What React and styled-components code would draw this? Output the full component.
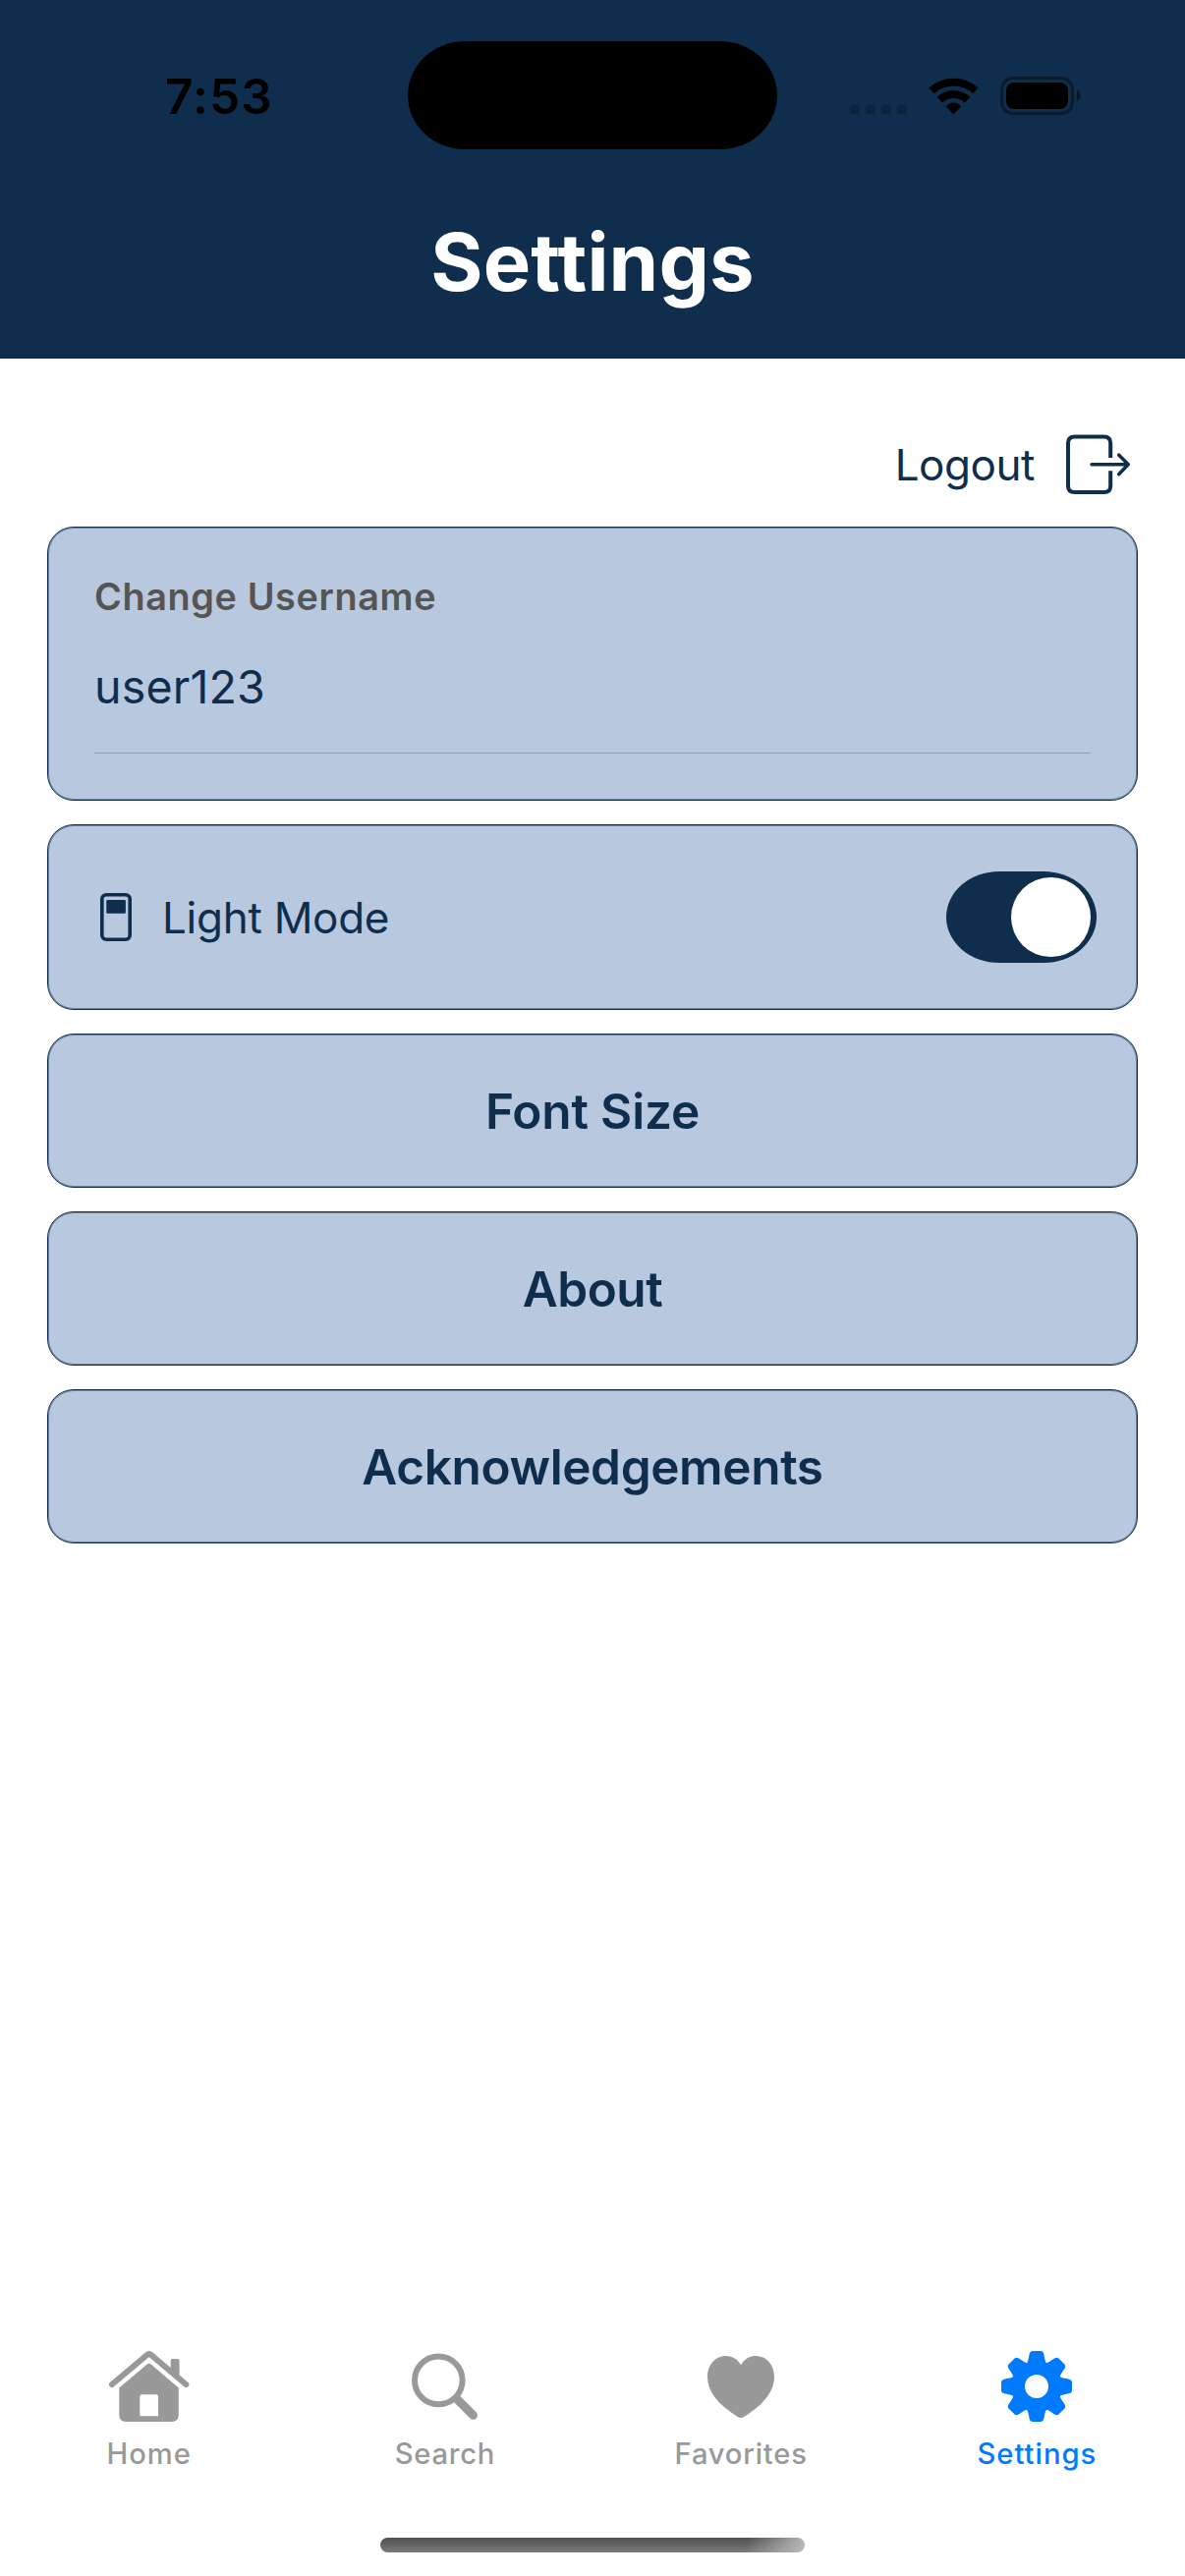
import React from "react";
import styled, { createGlobalStyle } from "styled-components";

const navy = "#0f2e4d";
const panel = "#b8c8de";
const gray = "#999999";
const blue = "#007aff";

const GlobalStyle = createGlobalStyle`
  *, *::before, *::after { box-sizing: border-box; }
  body {
    margin: 0;
    background: #ffffff;
    font-family: Inter, "Liberation Sans", sans-serif;
  }
  button { font: inherit; padding: 0; margin: 0; border: 0; background: none; }
  svg { display: block; flex: none; }
`;

const Screen = styled.div`
  display: flex;
  flex-direction: column;
  width: 1206px;
  height: 2622px;
  background: #ffffff;
  overflow: hidden;
`;

const Header = styled.header`
  flex: none;
  height: 365px;
  padding-top: 42px;
  background: ${navy};
`;

const StatusBar = styled.div`
  display: grid;
  grid-template-columns: 415px 376px 415px;
  height: 110px;
`;

const Time = styled.span`
  display: flex;
  align-items: center;
  padding: 2px 0 0 168px;
  color: #000;
  font-size: 49.5px;
  font-weight: 600;
  letter-spacing: 1.2px;
`;

const Island = styled.div`
  background: #000;
  border-radius: 58px / 55px;
`;

const Indicators = styled.div`
  display: flex;
  align-items: center;
  gap: 22px;
  padding: 1px 0 0 74px;
`;

const Title = styled.h1`
  margin: 64px 0 0;
  color: #fff;
  font-size: 81.4px;
  font-weight: 700;
  line-height: 101px;
  letter-spacing: 0.15px;
  text-align: center;
`;

const Main = styled.main`
  flex: 1;
  display: flex;
  flex-direction: column;
  padding: 45px 48px 0;
`;

const LogoutButton = styled.button`
  align-self: flex-end;
  display: flex;
  align-items: center;
  gap: 32px;
  height: 126px;
  padding-right: 7px;
  color: ${navy};
  font-size: 44px;
  letter-spacing: -0.45px;
`;

const CardList = styled.div`
  display: flex;
  flex-direction: column;
  gap: 24px;
`;

const Card = styled.section`
  height: ${(p) => p.$height}px;
  border: 1px solid ${navy};
  border-radius: 27px;
  background: ${panel};
  box-shadow: inset 0 0 0 1px rgba(15, 46, 77, 0.45);
  color: ${navy};
`;

const UsernameCard = styled(Card)`
  padding: 46px 47px 0;
`;

const FieldLabel = styled.label`
  display: block;
  color: #555555;
  font-size: 37.8px;
  font-weight: 600;
  line-height: 48px;
  letter-spacing: 0.62px;
`;

const FieldValue = styled.div`
  margin-top: 38px;
  padding-bottom: 37px;
  border-bottom: 1px solid #929fb1;
  font-size: 46.6px;
  line-height: 60px;
  letter-spacing: 0.15px;
`;

const ModeCard = styled(Card)`
  display: flex;
  align-items: center;
  padding: 0 41px 0 53px;
`;

const ModeLabel = styled.span`
  flex: 1;
  margin-left: 31px;
  padding-top: 1px;
  font-size: 44px;
  line-height: 54px;
  letter-spacing: -0.28px;
`;

const Toggle = styled.button`
  display: flex;
  align-items: center;
  justify-content: flex-end;
  width: 153px;
  height: 93px;
  padding-right: 6px;
  border-radius: 54px / 46.5px;
  background: ${navy};
`;

const Knob = styled.span`
  width: 81px;
  height: 81px;
  border-radius: 50%;
  background: #fff;
`;

const LinkCard = styled(Card)`
  display: flex;
  align-items: center;
  justify-content: center;
  width: 100%;
  font-size: 49.5px;
  font-weight: 600;
  letter-spacing: ${(p) => p.$tracking}px;
`;

const TabBar = styled.nav`
  flex: none;
  display: grid;
  grid-template-columns: repeat(4, 1fr);
  height: 190px;
  padding-left: 1px;
`;

const Tab = styled.button`
  display: flex;
  flex-direction: column;
  align-items: center;
  color: ${(p) => (p.$active ? blue : gray)};
`;

const TabLabel = styled.span`
  margin-top: 15px;
  font-size: 29.2px;
  font-weight: 500;
  line-height: 35px;
  letter-spacing: ${(p) => p.$tracking}px;
`;

const HomeIndicator = styled.div`
  flex: none;
  align-self: center;
  width: 432px;
  height: 15px;
  margin-bottom: 24px;
  border-radius: 8px;
  background:
    linear-gradient(100deg, rgba(190, 190, 190, 0) 86%, rgba(190, 190, 190, 0.95) 100%),
    linear-gradient(#4c504e, #7b7b7b);
`;

const SignalIcon = () => (
  <svg width="58" height="38" viewBox="0 0 58 38" fill="#000" opacity="0.2">
    {[0, 16, 32, 48].map((x) => (
      <rect key={x} x={x} y="27.5" width="10" height="10" rx="3.5" />
    ))}
  </svg>
);

const WifiIcon = () => (
  <svg width="51" height="38" viewBox="0 0 51 38">
    <g fill="none" stroke="#000" strokeWidth="7.8">
      <path d="M2.9 13.4A33.3 33.3 0 0 1 48 13.4" />
      <path d="M11.3 22.7A20.4 20.4 0 0 1 39.6 22.7" />
    </g>
    <path d="M17.8 29.6Q20.5 25.6 25.4 25.6T33 29.6L25.4 37.5Z" fill="#000" />
  </svg>
);

const BatteryIcon = () => (
  <svg width="82" height="39" viewBox="0 0 82 39">
    <rect x="1.5" y="1.5" width="72" height="36" rx="11.5" fill="none" stroke="#000" strokeOpacity="0.4" strokeWidth="3" />
    <rect x="6" y="6" width="63" height="27" rx="8" fill="#000" />
    <path d="M78 13.5C83 15.5 83 23.5 78 25.5Z" fill="#000" fillOpacity="0.45" />
  </svg>
);

const LogoutIcon = () => (
  <svg width="66" height="62" viewBox="0 0 66 62" fill="none" stroke={navy} strokeLinecap="round" strokeLinejoin="round">
    <path
      d="M45.2 24V9Q45.2 2.4 38.6 2.4H8.6Q2 2.4 2 9V52.4Q2 59 8.6 59H38.6Q45.2 59 45.2 52.4V37.3"
      strokeWidth="4"
      strokeLinecap="butt"
    />
    <path d="M26 30.8H63M53.6 21L63.3 30.8L53.6 40.8" strokeWidth="3.4" />
  </svg>
);

const SwitchIcon = () => (
  <svg width="32" height="49" viewBox="0 0 32 49">
    <rect x="1.8" y="1.8" width="28.4" height="45.4" rx="4.4" fill="none" stroke={navy} strokeWidth="3.6" />
    <rect x="6.3" y="7" width="19.6" height="13.7" rx="1.2" fill={navy} />
  </svg>
);

const HomeIcon = () => (
  <svg width="84" height="72" viewBox="-1 0 84 72" fill="currentColor">
    <path d="M3 34L38.6 4Q40.7 2.2 42.8 4L78.3 34" fill="none" stroke="currentColor" strokeWidth="6" strokeLinecap="round" />
    <path d="M62.7 17V10Q62.7 8 64.7 8H69.5Q71.6 8 71.6 10V29L62.7 21Z" />
    <path
      fillRule="evenodd"
      d="M10.3 37.4L38.7 13.6Q40.7 12.1 42.7 13.6L70.8 37.4V65Q70.8 72 63.8 72H17.3Q10.3 72 10.3 65ZM31.3 46.2V66.2H50V46.2Q50 44.2 48 44.2H33.3Q31.3 44.2 31.3 46.2Z"
    />
  </svg>
);

const SearchIcon = () => (
  <svg width="68" height="72" viewBox="0 -2.7 68 72" fill="none" stroke="currentColor">
    <circle cx="27.3" cy="27.2" r="24.3" strokeWidth="6" />
    <path d="M46 46.2L62.6 62.6" strokeWidth="8.8" strokeLinecap="round" />
  </svg>
);

const HeartIcon = () => (
  <svg width="68" height="72" viewBox="0 -5 68 72" fill="currentColor">
    <path d="M34 9.3C31 3.5 25.5 0 19 0C8 0 0 9 0 21.5C0 36 11 50 30.8 61.9Q34 64 37.2 61.9C57 50 68 36 68 21.5C68 9 60 0 49 0C42.5 0 37 3.5 34 9.3Z" />
  </svg>
);

const GearIcon = () => (
  <svg width="72" height="72" viewBox="-36 -36 72 72" fill="currentColor">
    <circle r="19" fill="none" stroke="currentColor" strokeWidth="14" />
    {[0, 45, 90, 135, 180, 225, 270, 315].map((angle) => (
      <path
        key={angle}
        transform={`rotate(${angle})`}
        d="M-10 -23C-8.6 -25.5 -8.2 -29 -7.3 -33Q-6.6 -36 -4 -36H4Q6.6 -36 7.3 -33C8.2 -29 8.6 -25.5 10 -23Z"
      />
    ))}
  </svg>
);

const tabs = [
  { label: "Home", Icon: HomeIcon, tracking: 1 },
  { label: "Search", Icon: SearchIcon, tracking: 0.75 },
  { label: "Favorites", Icon: HeartIcon, tracking: 0.78 },
  { label: "Settings", Icon: GearIcon, tracking: 1 , active: true },
];

export default function App() {
  return (
    <Screen>
      <GlobalStyle />
      <Header>
        <StatusBar>
          <Time>7:53</Time>
          <Island />
          <Indicators>
            <SignalIcon />
            <WifiIcon />
            <BatteryIcon />
          </Indicators>
        </StatusBar>
        <Title>Settings</Title>
      </Header>
      <Main>
        <LogoutButton>
          Logout
          <LogoutIcon />
        </LogoutButton>
        <CardList>
          <UsernameCard $height={279}>
            <FieldLabel>Change Username</FieldLabel>
            <FieldValue>user123</FieldValue>
          </UsernameCard>
          <ModeCard $height={189}>
            <SwitchIcon />
            <ModeLabel>Light Mode</ModeLabel>
            <Toggle role="switch" aria-checked="true">
              <Knob />
            </Toggle>
          </ModeCard>
          <LinkCard as="button" $height={157} $tracking={-0.14}>Font Size</LinkCard>
          <LinkCard as="button" $height={157} $tracking={-0.5}>About</LinkCard>
          <LinkCard as="button" $height={157} $tracking={-0.37}>Acknowledgements</LinkCard>
        </CardList>
      </Main>
      <TabBar>
        {tabs.map(({ label, Icon, tracking, active }) => (
          <Tab key={label} $active={active}>
            <Icon />
            <TabLabel $tracking={tracking}>{label}</TabLabel>
          </Tab>
        ))}
      </TabBar>
      <HomeIndicator />
    </Screen>
  );
}
